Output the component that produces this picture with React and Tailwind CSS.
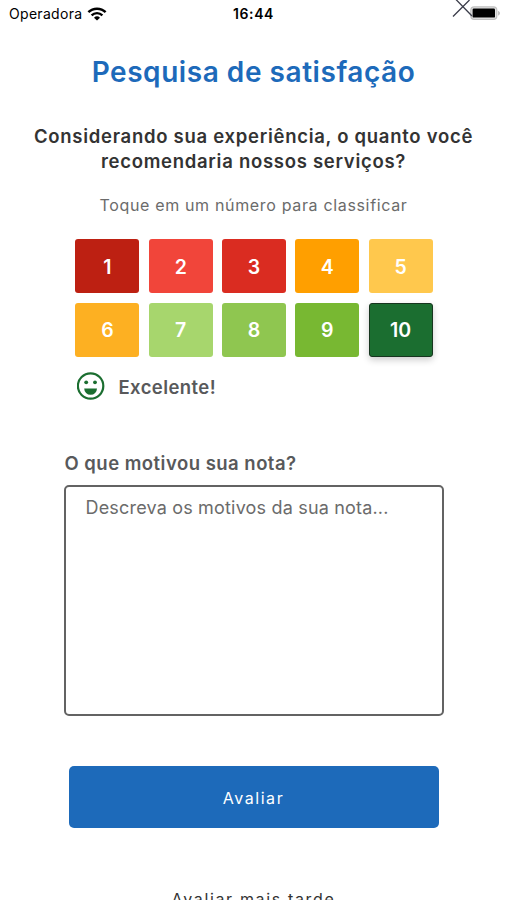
import { useState } from "react";
import clsx from "clsx";

const RATINGS = [
  { value: 1, color: "bg-[#bd2012]" },
  { value: 2, color: "bg-[#f1453a]" },
  { value: 3, color: "bg-[#da2c21]" },
  { value: 4, color: "bg-[#ff9f00]" },
  { value: 5, color: "bg-[#ffc84d]" },
  { value: 6, color: "bg-[#fdb022]" },
  { value: 7, color: "bg-[#a7d66d]" },
  { value: 8, color: "bg-[#8fc650]" },
  { value: 9, color: "bg-[#78b832]" },
  { value: 10, color: "bg-[#1b6e30]" },
];

const WifiIcon = () => (
  <svg width="20" height="14" viewBox="0 0 20 14" fill="none" stroke="#000">
    <path d="M1.4 5.2a12.2 12.2 0 0 1 17.2 0" strokeWidth="2.5" />
    <path d="M4.6 8.4a7.7 7.7 0 0 1 10.8 0" strokeWidth="2.3" />
    <path d="M10 13.6 7 10.7a4.3 4.3 0 0 1 6 0z" fill="#000" stroke="none" />
  </svg>
);

const BatteryIcon = () => (
  <svg width="31" height="15" viewBox="0 0 31 15">
    <rect x="0.8" y="0.8" width="26" height="12.6" rx="3.4" fill="#e4e4e4" stroke="#c0c0c0" strokeWidth="1.2" />
    <rect x="2.6" y="2.6" width="22.4" height="9" rx="1.2" fill="#000" />
    <path d="M28.2 5c2.2.7 2.2 3.8 0 4.5z" fill="#b5b5b5" />
  </svg>
);

const SmileIcon = () => (
  <svg width="28" height="28" viewBox="0 0 28 28">
    <circle cx="13.6" cy="14" r="12.7" fill="none" stroke="#1b6e30" strokeWidth="2.2" />
    <circle cx="9.2" cy="10.3" r="1.9" fill="#1b6e30" />
    <circle cx="18" cy="10.3" r="1.9" fill="#1b6e30" />
    <path d="M7.2 16.4H20a6.4 6.4 0 0 1-12.8 0z" fill="#1b6e30" />
  </svg>
);

const StatusBar = () => (
  <header className="relative flex h-[27px] items-center justify-between pr-[6px] pl-[9px] text-[14px] text-black">
    <div className="flex w-[150px] items-center gap-[5px]">
      <span className="tracking-[0.3px]">Operadora</span>
      <WifiIcon />
    </div>
    <span className="mr-[3px] font-semibold tracking-[0.6px]">16:44</span>
    <div className="flex w-[150px] justify-end">
      <BatteryIcon />
    </div>
    <svg className="absolute top-0 left-[452px]" width="21" height="18" viewBox="0 0 21 18">
      <path d="M1 16.5 17.5 0M3 -1.5 20 16" stroke="#3b3d4a" strokeWidth="1.3" />
    </svg>
  </header>
);

const App = () => {
  const [rating, setRating] = useState(10);
  const [reason, setReason] = useState("");

  return (
    <div className="h-[900px] w-full overflow-hidden bg-white font-['Inter',sans-serif]">
      <StatusBar />
      <main className="flex flex-col items-center">
        <h1 className="mt-[27px] text-[28px] leading-[36px] font-semibold tracking-[0.55px] whitespace-nowrap text-[#1d6aba]">
          Pesquisa de satisfação
        </h1>
        <h2 className="mt-[34px] text-center text-[18.5px] leading-[25px] font-semibold tracking-[0.72px] whitespace-nowrap text-[#333]">
          Considerando sua experiência, o quanto você
          <br />
          recomendaria nossos serviços?
        </h2>
        <p className="mt-[19px] text-[16px] leading-[24px] tracking-[0.66px] whitespace-nowrap text-[#6b6b6b]">
          Toque em um número para classificar
        </p>

        <div className="mt-[22px] ml-[1px] grid grid-cols-5 gap-x-[9.3px] gap-y-[9.5px]">
          {RATINGS.map(({ value, color }) => (
            <button
              key={value}
              onClick={() => setRating(value)}
              className={clsx(
                "h-[54px] w-[64px] rounded-[3px] pt-[3px] text-[19.5px] font-semibold text-white",
                color,
                rating === value && "border-[1.5px] border-[#17351f] shadow-[0_3px_7px_rgba(0,0,0,0.2)]",
              )}
            >
              {value}
            </button>
          ))}
        </div>

        <div className="mt-[15px] ml-[2px] flex w-[356px] items-center gap-[14px]">
          <SmileIcon />
          <span className="mt-[2px] text-[18.5px] font-semibold tracking-[0.42px] whitespace-nowrap text-[#58595b]">
            Excelente!
          </span>
        </div>

        <div className="mt-[49px] w-[380px]">
          <label
            htmlFor="reason"
            className="ml-[1px] block w-fit text-[18.5px] leading-[26px] font-semibold tracking-[0.48px] whitespace-nowrap text-[#58595b]"
          >
            O que motivou sua nota?
          </label>
          <textarea
            id="reason"
            value={reason}
            onChange={(e) => setReason(e.target.value)}
            placeholder="Descreva os motivos da sua nota..."
            className="mt-[9px] block h-[231px] w-[380px] resize-none rounded-[5px] border-2 border-[#636363] px-[20px] py-[8px] text-[18px] leading-[26px] tracking-[0.18px] outline-none placeholder:text-[#6b6b6b]"
          />
        </div>

        <button className="mt-[50px] h-[62px] w-[370px] rounded-[5px] bg-[#1d6aba] pt-[2px] text-[16px] tracking-[1.55px] text-white">
          Avaliar
        </button>
        <button className="mt-[59px] text-[16px] leading-[24px] tracking-[1.65px] whitespace-nowrap text-[#333]">
          Avaliar mais tarde
        </button>
      </main>
    </div>
  );
};

export default App;
